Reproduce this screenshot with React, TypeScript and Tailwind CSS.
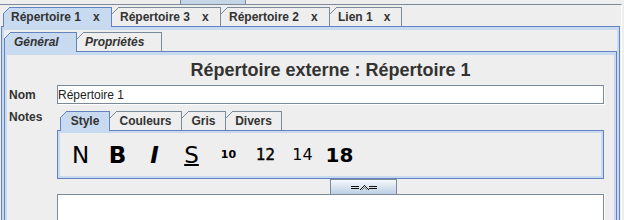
import React from "react";

function Corner({ color, first }: { color: string; first?: boolean }) {
  return (
    <svg
      className={first ? "absolute left-[-1px] top-[-1px]" : "absolute left-0 top-[-1px]"}
      width={7}
      height={7}
      shapeRendering="crispEdges"
    >
      {[0, 1, 2, 3, 4, 5].map((j) => (
        <rect key={"f" + j} x={0} y={j} width={6 - j} height={1} fill="#eeeeee" />
      ))}
      {[0, 1, 2, 3, 4, 5, 6].map((i) => (
        <rect key={"d" + i} x={i} y={6 - i} width={1} height={1} fill={color} />
      ))}
    </svg>
  );
}

function X() {
  return <span className="ml-[12px]">x</span>;
}

export default function App() {
  return (
    <div className="w-[624px] h-[220px] overflow-hidden bg-[#eeeeee] text-[#333333] font-['Liberation_Sans',Arial,sans-serif] text-[12px]">
      {/* partially visible control above */}
      <div className="h-[4px]">
        <div className="ml-[180px] w-[66px] h-[4px] border-x border-[#7a8a99] bg-[#c6d5e5]" />
      </div>
      <div className="w-[622px] h-[216px] border-t border-r border-t-[#7a8a99] border-r-white">
        <div className="ml-[1px] w-[619px] pt-[2px]">
          {/* outer tabs */}
          <div className="flex items-end pl-[2px] whitespace-nowrap font-bold leading-[14px]">
            <div className="relative z-10 -mb-px h-[20px] w-[109px] border-t border-x border-[#6382bf] bg-[#c8daf0] pl-[7px] pt-[2px]">
              <Corner color="#6382bf" first />
              Répertoire 1<X />
            </div>
            <div className="relative h-[19px] w-[109px] border-t border-r border-[#7a8a99] pl-[8px] pt-[2px]">
              <Corner color="#7a8a99" />
              Répertoire 3<X />
            </div>
            <div className="relative h-[19px] w-[109px] border-t border-r border-[#7a8a99] pl-[8px] pt-[2px]">
              <Corner color="#7a8a99" />
              Répertoire 2<X />
            </div>
            <div className="relative h-[19px] w-[72px] border-t border-r border-[#7a8a99] pl-[8px] pt-[2px]">
              <Corner color="#7a8a99" />
              Lien 1<span className="ml-[11px]">x</span>
            </div>
          </div>
          {/* outer panel */}
          <div className="h-[194px] border-t border-x border-[#6382bf]">
            <div className="h-full border-t-[3px] border-x-[2px] border-[#c8daf0] pt-[2px]">
              {/* inner tabs */}
              <div className="flex items-end whitespace-nowrap font-bold italic leading-[14px]">
                <div className="relative z-10 -mb-px h-[20px] w-[73px] border-t border-x border-[#6382bf] bg-[#c8daf0] pl-[9px] pt-[2px]">
                  <Corner color="#6382bf" first />
                  Général
                </div>
                <div className="relative h-[19px] w-[85px] border-t border-r border-[#7a8a99] pl-[8px] pt-[2px]">
                  <Corner color="#7a8a99" />
                  Propriétés
                </div>
              </div>
              {/* inner panel */}
              <div className="h-[180px] border-t border-x border-[#6382bf]">
                <div className="h-full border-t-[3px] border-x-[2px] border-[#c8daf0] pt-[5px]">
                  <div className="ml-[50px] w-[547px] text-center text-[18px] leading-[20px] font-bold whitespace-nowrap">
                    Répertoire externe : Répertoire 1
                  </div>
                  <div className="mt-[5px] flex">
                    <div className="w-[50px] pl-[2px] pt-[3px] font-bold leading-[14px]">Nom</div>
                    <div className="w-[547px] h-[19px] border border-[#7a8a99] bg-white shadow-[1px_1px_0_#ffffff] leading-[18px] text-[#222222] whitespace-nowrap">
                      Répertoire 1
                    </div>
                  </div>
                  <div className="mt-[1px] flex">
                    <div className="w-[50px] pl-[2px] pt-[5px] font-bold leading-[14px]">Notes</div>
                    <div className="w-[547px] pt-[6px]">
                      {/* style tabs */}
                      <div className="flex items-end pl-[3px] whitespace-nowrap font-bold leading-[14px]">
                        <div className="relative z-10 -mb-px h-[20px] w-[50px] border-t border-x border-[#6382bf] bg-[#c8daf0] pt-[2px] text-center">
                          <Corner color="#6382bf" first />
                          Style
                        </div>
                        <div className="relative h-[19px] w-[72px] border-t border-r border-[#7a8a99] pt-[2px] text-center">
                          <Corner color="#7a8a99" />
                          Couleurs
                        </div>
                        <div className="relative h-[19px] w-[44px] border-t border-r border-[#7a8a99] pt-[2px] text-center">
                          <Corner color="#7a8a99" />
                          Gris
                        </div>
                        <div className="relative h-[19px] w-[56px] border-t border-r border-[#7a8a99] pt-[2px] text-center">
                          <Corner color="#7a8a99" />
                          Divers
                        </div>
                      </div>
                      {/* style toolbar box */}
                      <div className="h-[49px] border border-[#6382bf]">
                        <div className="h-full border-2 border-[#c8daf0]">
                          <div className="flex h-full items-center pl-[2px] pt-[1px] text-black font-['DejaVu_Sans',sans-serif]">
                            <span className="w-[37px] text-center text-[23px] leading-[28px]">N</span>
                            <span className="w-[37px] text-center text-[23px] leading-[28px] font-bold">B</span>
                            <span className="w-[37px] text-center text-[23px] leading-[28px] font-bold italic">I</span>
                            <span className="w-[37px] text-center text-[23px] leading-[28px] underline decoration-[1.5px] underline-offset-[1px]">
                              S
                            </span>
                            <span className="w-[37px] text-center text-[11px] leading-[14px] font-bold">10</span>
                            <span className="w-[37px] text-center text-[15px] leading-[18px] [-webkit-text-stroke:0.45px_#000000]">12</span>
                            <span className="w-[37px] text-center text-[16px] leading-[20px]">14</span>
                            <span className="w-[37px] text-center text-[20px] leading-[24px] font-bold">18</span>
                          </div>
                        </div>
                      </div>
                      {/* splitter */}
                      <div className="h-[15px]">
                        <div className="ml-[273px] w-[67px] h-[15px] border-t border-x border-[#7a8a99] bg-linear-to-b from-[#f6f9fc] to-[#bccfe4] flex items-center justify-center">
                          <svg width={26} height={5} shapeRendering="crispEdges">
                            <rect x={0} y={1} width={8} height={1} fill="#111111" />
                            <rect x={0} y={3} width={8} height={1} fill="#111111" />
                            <rect x={18} y={1} width={8} height={1} fill="#111111" />
                            <rect x={18} y={3} width={8} height={1} fill="#111111" />
                            {[
                              [9, 4],
                              [10, 3],
                              [11, 2],
                              [12, 1],
                              [13, 0],
                              [14, 1],
                              [15, 2],
                              [16, 3],
                              [17, 4],
                            ].map(([x, y]) => (
                              <rect key={x} x={x} y={y} width={1} height={1} fill="#111111" />
                            ))}
                            {[
                              [11, 4],
                              [12, 3],
                              [13, 2],
                              [14, 3],
                              [15, 4],
                            ].map(([x, y]) => (
                              <rect key={"i" + x} x={x} y={y} width={1} height={1} fill="#777777" />
                            ))}
                          </svg>
                        </div>
                      </div>
                      {/* text area */}
                      <div className="w-[547px] h-[30px] border-t border-x border-[#7a8a99] bg-white shadow-[1px_0_0_#ffffff]" />
                    </div>
                  </div>
                </div>
              </div>
            </div>
          </div>
        </div>
      </div>
    </div>
  );
}
